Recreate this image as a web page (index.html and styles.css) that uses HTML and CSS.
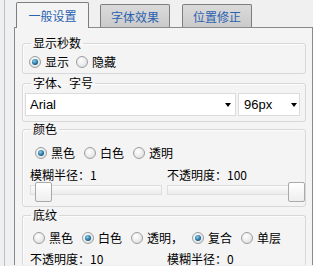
FILE: index.html
```html
<!DOCTYPE html>
<html lang="zh-CN">
<head>
    <meta charset="UTF-8">
    <meta name="viewport" content="width=device-width, initial-scale=1.0">
    <title>时钟设置</title>
    <link rel="stylesheet" href="styles.css">
</head>
<body>

    <div class="frame">
        <div class="tabs">
            <div class="tab active">一般设置</div>
            <div class="tab second">字体效果</div>
            <div class="tab third">位置修正</div>
        </div>

        <div class="panel">
            <!-- 显示秒数 -->
            <fieldset class="group g-seconds">
                <legend>显示秒数</legend>
                <div class="options">
                    <label class="opt"><span class="radio on"></span>显示</label>
                    <label class="opt"><span class="radio"></span>隐藏</label>
                </div>
            </fieldset>

            <!-- 字体、字号 -->
            <fieldset class="group g-font">
                <legend>字体、字号</legend>
                <div class="selects">
                    <div class="select font-name">Arial<span class="arrow"></span></div>
                    <div class="select font-size">96px<span class="arrow"></span></div>
                </div>
            </fieldset>

            <!-- 颜色 -->
            <fieldset class="group g-color">
                <legend>颜色</legend>
                <div class="options">
                    <label class="opt"><span class="radio on"></span>黑色</label>
                    <label class="opt"><span class="radio"></span>白色</label>
                    <label class="opt"><span class="radio"></span>透明</label>
                </div>
                <div class="pair">
                    <div class="caption">模糊半径：1</div>
                    <div class="caption">不透明度：100</div>
                    <div class="slider first"><span class="thumb" style="left: 5px"></span></div>
                    <div class="slider"><span class="thumb" style="right: 0"></span></div>
                </div>
            </fieldset>

            <!-- 底纹 -->
            <fieldset class="group g-texture">
                <legend>底纹</legend>
                <div class="options">
                    <label class="opt"><span class="radio"></span>黑色</label>
                    <label class="opt"><span class="radio on"></span>白色</label>
                    <label class="opt"><span class="radio"></span>透明，</label>
                    <label class="opt"><span class="radio on"></span>复合</label>
                    <label class="opt"><span class="radio"></span>单层</label>
                </div>
                <div class="pair">
                    <div class="caption">不透明度：10</div>
                    <div class="caption">模糊半径：0</div>
                </div>
            </fieldset>
        </div>
    </div>

</body>
</html>
```

FILE: styles.css
```css
/* Basic Reset */
* {
    margin: 0;
    padding: 0;
    box-sizing: border-box;
}

body {
    width: 313px;
    height: 266px;
    overflow: hidden;
    background: #f0f0f0;
    color: #000;
    font-family: "Noto Sans CJK SC", "Liberation Sans", sans-serif;
    font-size: 12px;
}

.frame {
    height: 266px;
    margin-left: 4px;
    padding: 2px 0 0 9px;
    border-left: 1px solid #b7c2cd;
}

/* Tabs */
.tabs {
    display: flex;
    align-items: flex-end;
    height: 25px;
    padding-left: 2px;
}

.tab {
    width: 70px;
    height: 23px;
    padding-top: 4px;
    border: 1px solid #7d7d7d;
    border-bottom: none;
    border-radius: 2px 2px 0 0;
    background: linear-gradient(#dadada, #cbcbcb);
    color: #2b62b0;
    text-align: center;
    line-height: 16px;
}

.tab.active {
    position: relative;
    z-index: 1;
    width: 73px;
    height: 26px;
    margin-bottom: -1px;
    padding-top: 5px;
    background: #f4f4f4;
}

.tab.second {
    margin-left: 11px;
}

.tab.third {
    margin-left: 12px;
}

/* Panel */
.panel {
    width: 299px;
    height: 238px;
    padding: 8px 6px 0 7px;
    border: 1px solid #8a8a8a;
    border-bottom: none;
    background: #f4f4f4;
}

.group {
    margin: 0;
    padding: 0;
    border: 1px solid #d6d8da;
    border-radius: 3px;
    box-shadow: inset 1px 1px 0 #fcfcfc;
}

.group legend {
    margin-left: 8px;
    padding: 0 2px;
    line-height: 14px;
}

.g-seconds {
    padding: 4px 0 3px;
}

.g-seconds .options {
    margin-left: 6px;
}

.g-font {
    margin-top: 2px;
    padding: 3px 0 5px 2px;
}

.g-font legend {
    margin-left: 6px;
}

.g-color {
    padding: 9px 0 4px;
}

.g-color .options {
    margin-left: 12px;
}

.g-texture {
    margin-top: 1px;
    padding: 8px 0 0;
    border-bottom: none;
}

.g-texture .options {
    margin-left: 10px;
}

/* Radio options */
.options {
    display: flex;
    height: 16px;
    align-items: center;
    gap: 7px;
}

.g-color .options,
.g-texture .options {
    gap: 9px;
}

.opt {
    display: flex;
    align-items: center;
    gap: 4px;
    line-height: 16px;
}

.radio {
    position: relative;
    width: 12px;
    height: 12px;
    border: 1px solid #9b9d9f;
    border-radius: 50%;
    background: radial-gradient(circle at 40% 35%, #ffffff, #d9d9d9);
}

.radio.on::after {
    content: "";
    position: absolute;
    top: 2px;
    left: 2px;
    width: 6px;
    height: 6px;
    border-radius: 50%;
    background: radial-gradient(circle at 40% 35%, #8fd0ee, #1d6a98 60%, #0d3a5a);
}

/* Selects */
.selects {
    display: flex;
    gap: 2px;
}

.select {
    display: flex;
    align-items: center;
    justify-content: space-between;
    height: 23px;
    border: 1px solid #dcdcdc;
    background: #fff;
    font-family: "Liberation Sans", Arial, sans-serif;
    font-size: 13px;
}

.font-name {
    width: 211px;
    padding: 0 4px 0 4px;
}

.font-size {
    width: 62px;
    padding: 0 2px 0 5px;
}

.arrow {
    width: 0;
    height: 0;
    border-top: 4px solid #000;
    border-left: 3.5px solid transparent;
    border-right: 3.5px solid transparent;
}

/* Caption + slider pairs */
.pair {
    display: grid;
    grid-template-columns: 137px 138px;
    margin-left: 7px;
}

.g-color .pair {
    margin-top: 7px;
}

.g-texture .pair {
    margin-top: 7px;
}

.caption {
    line-height: 14px;
}

.g-texture .caption {
    line-height: 12px;
}

.slider {
    position: relative;
    height: 20px;
}

.slider.first {
    width: 132px;
}

.slider::before {
    content: "";
    position: absolute;
    top: 3px;
    left: 0;
    right: 0;
    height: 8px;
    border: 1px solid #dedede;
    background: linear-gradient(#fbfbfb, #ececec);
}

.thumb {
    position: absolute;
    top: 0;
    width: 17px;
    height: 20px;
    border: 1px solid #a9a9a9;
    border-radius: 2px;
    background: linear-gradient(#ffffff, #eeeeee);
}
```
